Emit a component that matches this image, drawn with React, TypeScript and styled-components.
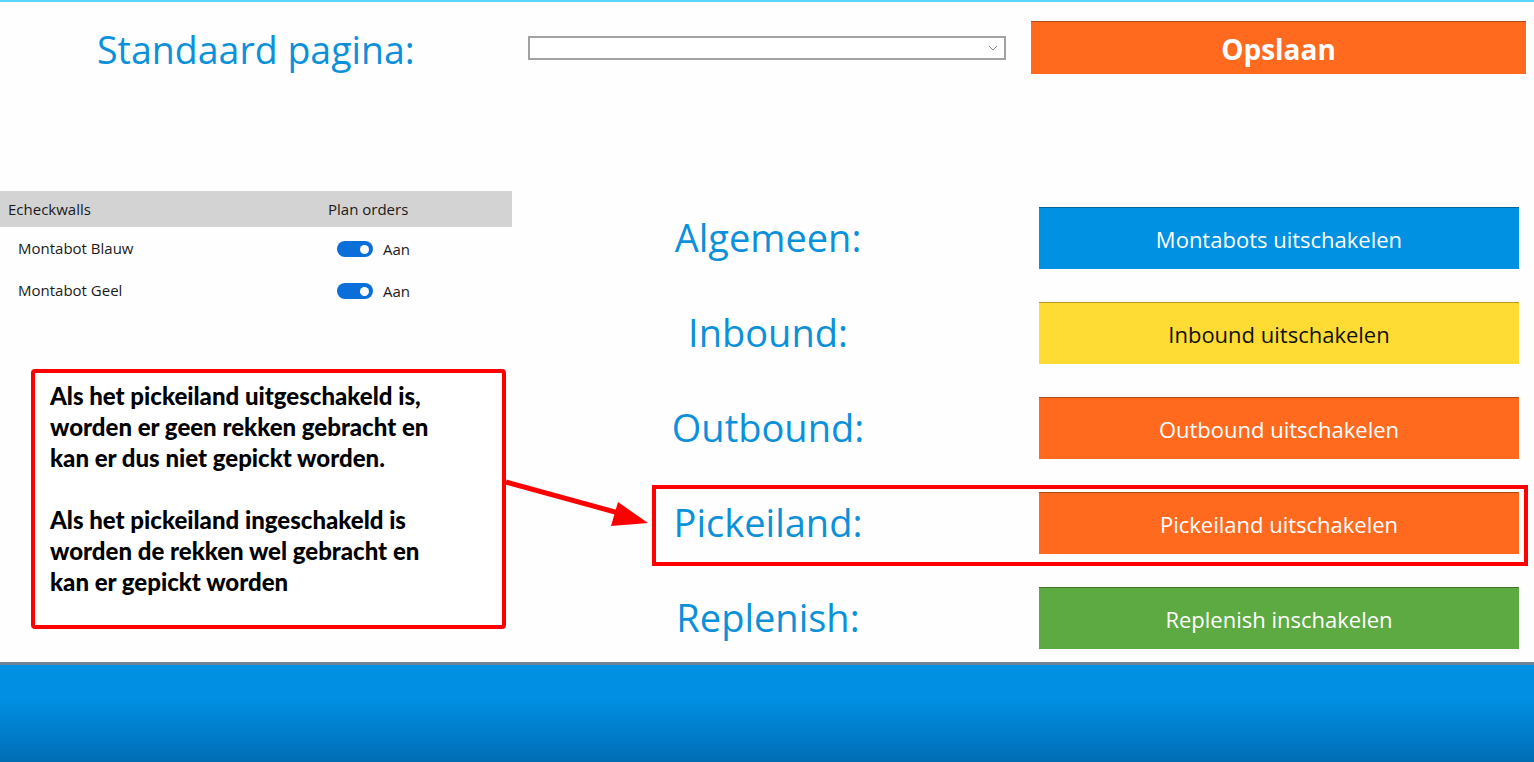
import React from "react";
import styled, { createGlobalStyle } from "styled-components";

const GlobalStyle = createGlobalStyle`
  html, body { margin: 0; padding: 0; background: #fefefe; }
  body { font-family: "Open Sans", "Noto Sans", sans-serif; color: #1e1e1e; }
  * { box-sizing: border-box; }
`;

const Page = styled.div`
  position: relative;
  width: 1534px;
  height: 762px;
  display: flex;
  flex-direction: column;
  overflow: hidden;
`;

const TopLine = styled.div`
  height: 2px;
  background: #5ad3ff;
  flex: none;
`;

const Header = styled.header`
  margin-top: 19px;
  height: 53px;
  display: flex;
  align-items: center;
  flex: none;
`;

const Title = styled.h1`
  margin: 4px 0 0;
  width: 528px;
  padding-left: 97px;
  font-size: 37.5px;
  font-weight: 400;
  line-height: 1.2;
  color: #0b91d9;
  white-space: nowrap;
`;

const Select = styled.div`
  width: 478px;
  height: 24px;
  border: 2px solid #a2a2a2;
  background: #fff;
  display: flex;
  align-items: center;
  justify-content: flex-end;
  padding-right: 6px;
`;

const SaveButton = styled.button`
  margin-left: 25px;
  width: 495px;
  height: 53px;
  padding-top: 3px;
  border: none;
  border-top: 1px solid rgba(0, 0, 0, 0.3);
  background: #ff6a1f;
  color: #fff;
  font-family: "Open Sans", sans-serif;
  font-size: 28px;
  font-weight: 700;
  cursor: pointer;
`;

const Main = styled.main`
  margin-top: 117px;
  display: flex;
  align-items: flex-start;
  flex: none;
`;

const LeftColumn = styled.section`
  width: 512px;
  display: flex;
  flex-direction: column;
`;

const TableRow = styled.div<{ $head?: boolean }>`
  display: grid;
  grid-template-columns: 328px 1fr;
  align-items: center;
  height: ${(p) => (p.$head ? "36px" : "42px")};
  background: ${(p) => (p.$head ? "#d3d3d3" : "transparent")};
  font-size: 15px;
  color: #1a1a1a;
`;

const NameCell = styled.div<{ $head?: boolean }>`
  padding-left: ${(p) => (p.$head ? "8px" : "18px")};
`;

const ToggleCell = styled.div`
  display: flex;
  align-items: center;
  gap: 10px;
  padding-left: 9px;
  padding-top: 2px;
`;

const Toggle = styled.span`
  position: relative;
  display: inline-block;
  width: 36px;
  height: 16px;
  border-radius: 8px;
  background: #0a6fd9;
  &::after {
    content: "";
    position: absolute;
    right: 4px;
    top: 3.5px;
    width: 9px;
    height: 9px;
    border-radius: 50%;
    background: #fff;
  }
`;

const Callout = styled.div`
  margin-top: 58px;
  margin-left: 31px;
  width: 475px;
  height: 260px;
  border: 4px solid #ff0000;
  border-radius: 4px;
  padding: 7px 15px;
  background: #fff;
  font-family: Lato, "Open Sans", sans-serif;
  font-weight: 900;
  font-size: 24px;
  line-height: 31px;
  color: #000;
`;

const Paragraph = styled.p`
  margin: 0 0 31px;
`;

const RightColumn = styled.section`
  margin-left: 140px;
  width: 876px;
  padding-top: 16px;
  display: flex;
  flex-direction: column;
  gap: 33px;
`;

const ActionRow = styled.div<{ $highlight?: boolean }>`
  position: relative;
  height: 62px;
  display: flex;
  align-items: center;
  &::after {
    content: "";
    display: ${(p) => (p.$highlight ? "block" : "none")};
    position: absolute;
    left: 0;
    right: 0;
    top: -7px;
    bottom: -12px;
    border: 4px solid #ff0000;
    pointer-events: none;
  }
`;

const ActionLabel = styled.div`
  width: 232px;
  text-align: center;
  font-size: 38px;
  line-height: 1.2;
  color: #0b91d9;
`;

const ActionButton = styled.button<{ $bg: string; $fg: string }>`
  margin-left: auto;
  margin-right: 9px;
  width: 480px;
  height: 62px;
  border: none;
  border-top: 1px solid rgba(0, 0, 0, 0.3);
  background: ${(p) => p.$bg};
  color: ${(p) => p.$fg};
  font-family: "Open Sans", sans-serif;
  font-size: 22px;
  cursor: pointer;
`;

const Footer = styled.footer`
  margin-top: auto;
  height: 100px;
  flex: none;
  border-top: 3px solid #6d8496;
  background: linear-gradient(to bottom, #0090e2 0%, #008fe2 35%, #0078c4 80%, #006cb2 100%);
`;

const ArrowSvg = styled.svg`
  position: absolute;
  left: 500px;
  top: 470px;
  width: 160px;
  height: 70px;
  pointer-events: none;
`;

const actions = [
  { label: "Algemeen:", text: "Montabots uitschakelen", bg: "#0091e2", fg: "#fff" },
  { label: "Inbound:", text: "Inbound uitschakelen", bg: "#ffdc33", fg: "#111" },
  { label: "Outbound:", text: "Outbound uitschakelen", bg: "#ff6a1f", fg: "#fff" },
  { label: "Pickeiland:", text: "Pickeiland uitschakelen", bg: "#ff6a1f", fg: "#fff", highlight: true },
  { label: "Replenish:", text: "Replenish inschakelen", bg: "#5eaa42", fg: "#fff" },
];

const walls = ["Montabot Blauw", "Montabot Geel"];

export default function App() {
  return (
    <>
      <GlobalStyle />
      <Page>
        <TopLine />
        <Header>
          <Title>Standaard pagina:</Title>
          <Select>
            <svg width="10" height="6" viewBox="0 0 10 6">
              <polyline points="1,1 5,5 9,1" fill="none" stroke="#8a8a8a" strokeWidth="1" />
            </svg>
          </Select>
          <SaveButton>Opslaan</SaveButton>
        </Header>
        <Main>
          <LeftColumn>
            <TableRow $head>
              <NameCell $head>Echeckwalls</NameCell>
              <div>Plan orders</div>
            </TableRow>
            {walls.map((w) => (
              <TableRow key={w}>
                <NameCell>{w}</NameCell>
                <ToggleCell>
                  <Toggle />
                  <span>Aan</span>
                </ToggleCell>
              </TableRow>
            ))}
            <Callout>
              <Paragraph>
                Als het pickeiland uitgeschakeld is,
                <br />
                worden er geen rekken gebracht en
                <br />
                kan er dus niet gepickt worden.
              </Paragraph>
              <Paragraph>
                Als het pickeiland ingeschakeld is
                <br />
                worden de rekken wel gebracht en
                <br />
                kan er gepickt worden
              </Paragraph>
            </Callout>
          </LeftColumn>
          <RightColumn>
            {actions.map((a) => (
              <ActionRow key={a.label} $highlight={a.highlight}>
                <ActionLabel>{a.label}</ActionLabel>
                <ActionButton $bg={a.bg} $fg={a.fg}>
                  {a.text}
                </ActionButton>
              </ActionRow>
            ))}
          </RightColumn>
        </Main>
        <Footer />
        <ArrowSvg viewBox="0 0 160 70">
          <line x1="6" y1="12" x2="126" y2="45" stroke="#ff0000" strokeWidth="5" />
          <polygon points="148,53 118,32 111,56" fill="#ff0000" />
        </ArrowSvg>
      </Page>
    </>
  );
}
